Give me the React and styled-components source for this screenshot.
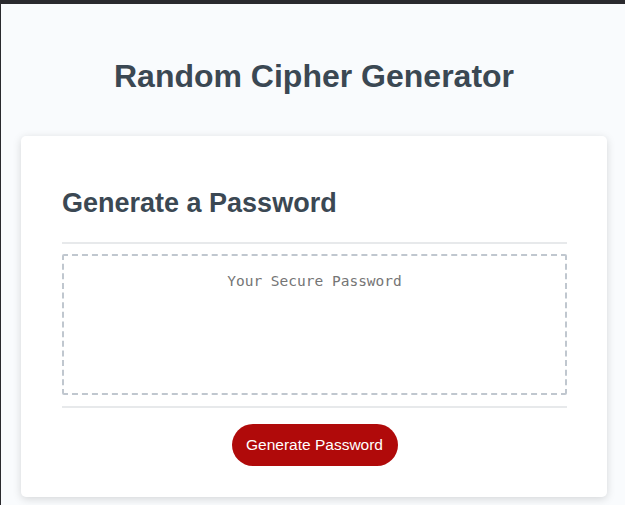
import React from 'react';
import styled, { createGlobalStyle } from 'styled-components';

const GlobalStyle = createGlobalStyle`
	html, body {
		margin: 0;
		padding: 0;
		background-color: #f9fbfd;
	}
	body {
		font-family: 'Liberation Sans', Arial, sans-serif;
	}
`;

const App = () => {
	return (
		<>
			<GlobalStyle />
			<Frame>
				<Wrapper>
					<Header>
						<Title>Random Cipher Generator</Title>
					</Header>
					<Card>
						<CardHeader>
							<CardTitle>Generate a Password</CardTitle>
						</CardHeader>
						<CardBody>
							<PasswordBox
								readOnly
								placeholder="Your Secure Password"
								aria-label="Generated Password"
							/>
						</CardBody>
						<CardFooter>
							<GenerateButton type="button">Generate Password</GenerateButton>
						</CardFooter>
					</Card>
				</Wrapper>
			</Frame>
		</>
	);
};

const Frame = styled.div`
	min-height: 505px;
	box-sizing: border-box;
	border-top: 4px solid #2a2a2e;
	border-left: 1px solid #2a2a2e;
	background-color: #f9fbfd;
`;

const Wrapper = styled.div`
	padding: 0 18px 9px 20px;
`;

const Header = styled.header`
	text-align: center;
	padding: 46px 0 34px;
	color: #3b4853;
`;

const Title = styled.h1`
	margin: 0;
	font-size: 32px;
	line-height: 52px;
	font-weight: 700;
`;

const Card = styled.section`
	background-color: #fff;
	border-radius: 5px;
	box-shadow: rgba(0, 0, 0, 0.15) 0 2px 8px 0;
	color: #3b4853;
	padding: 30px 40px 30px 41px;
`;

const CardHeader = styled.div`
	&::after {
		content: " ";
		display: block;
		width: 100%;
		height: 2px;
		background: #e7e9eb;
	}
`;

const CardTitle = styled.h2`
	font-size: 27px;
	font-weight: 700;
	margin: 22px 0 24px;
	line-height: 30px;
`;

const CardBody = styled.div`
	padding: 10px 0 11px;
`;

const PasswordBox = styled.textarea`
	display: block;
	width: 100%;
	height: 141px;
	box-sizing: border-box;
	border: 2px dashed #c0c7cf;
	border-radius: 2px;
	resize: none;
	padding: 14px 16px;
	font-family: 'DejaVu Sans Mono', 'Liberation Mono', monospace;
	font-size: 14.5px;
	line-height: 22px;
	text-align: center;
	color: #333;
	background: #fff;

	&::placeholder {
		color: #757575;
	}

	&:focus {
		outline: none;
	}
`;

const CardFooter = styled.div`
	text-align: center;

	&::before {
		content: " ";
		display: block;
		width: 100%;
		height: 2px;
		background: #e7e9eb;
	}
`;

const GenerateButton = styled.button`
	display: block;
	margin: 16px auto 1px;
	border: none;
	background-color: #b00a0a;
	color: #fff;
	border-radius: 21px;
	height: 42px;
	width: 166px;
	padding: 0;
	font-family: 'Liberation Sans', Arial, sans-serif;
	font-size: 15.5px;
	cursor: pointer;
`;

export default App;
